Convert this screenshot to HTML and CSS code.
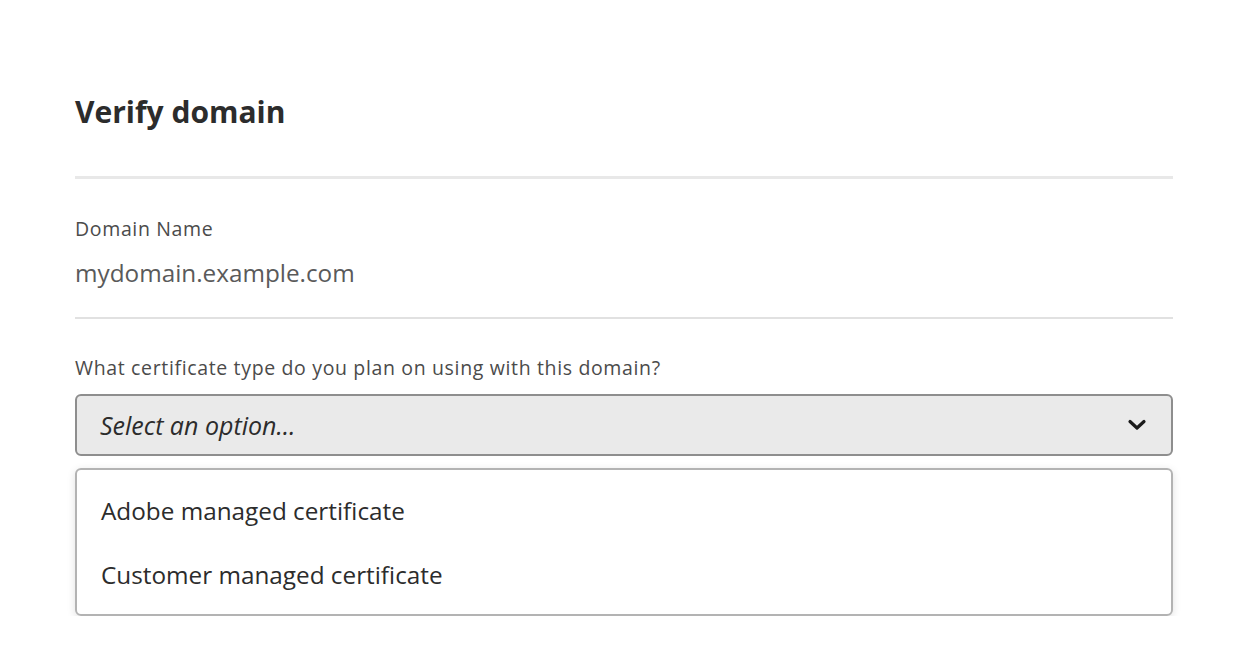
FILE: index.html
```html
<!DOCTYPE html>
<html>
<head>
<meta charset="utf-8">
<link rel="stylesheet" href="styles.css">
</head>
<body>
<div class="page">
  <h1 class="title">Verify domain</h1>
  <div class="divider-thick"></div>
  <div class="field">
    <div class="label">Domain Name</div>
    <div class="value">mydomain.example.com</div>
  </div>
  <div class="divider-thin"></div>
  <div class="label q">What certificate type do you plan on using with this domain?</div>
  <div class="picker">
    <span class="placeholder">Select an option…</span>
    <svg class="chevron" width="20" height="14" viewBox="0 0 20 14"><path d="M3 3.5 L10 10 L17 3.5" fill="none" stroke="#1b1b1b" stroke-width="3.2" stroke-linecap="round" stroke-linejoin="round"/></svg>
  </div>
  <div class="menu">
    <div class="item">Adobe managed certificate</div>
    <div class="item">Customer managed certificate</div>
  </div>
</div>
</body>
</html>
```
FILE: styles.css
```css
html, body { margin: 0; padding: 0; background: #fff; }
body { font-family: "Open Sans", "Noto Sans", sans-serif; color: #2c2c2c; }
.page { width: 1098px; padding: 0 0 0 75px; display: flex; flex-direction: column; }
.title { margin: 92px 0 0 0; font-size: 30px; line-height: 40px; font-weight: 700; color: #2c2c2c; }
.divider-thick { height: 3px; background: #e8e8e8; margin-top: 44px; }
.field { display: flex; flex-direction: column; }
.label { font-size: 19.5px; letter-spacing: 0.65px; line-height: 24px; color: #4b4b4b; margin-top: 38px; }
.value { font-size: 24.3px; line-height: 30px; color: #5a5a5a; margin-top: 17px; }
.divider-thin { height: 2px; background: #e1e1e1; margin-top: 29px; }
.q { margin-top: 37px; }
.picker { margin-top: 14px; height: 58px; border: 2px solid #8e8e8e; border-radius: 6px; background: #eaeaea; display: flex; align-items: center; justify-content: space-between; padding: 0 24px 0 23px; }
.placeholder { font-style: italic; font-size: 25px; color: #2c2c2c; }
.chevron { display: block; }
.menu { margin-top: 12px; border: 2px solid #b3b3b3; border-radius: 6px; box-shadow: 0 2px 8px rgba(0,0,0,0.12); padding: 9px 0 7px 0; display: flex; flex-direction: column; }
.item { height: 64px; line-height: 64px; padding-left: 24px; font-size: 24.3px; color: #2c2c2c; }
```
